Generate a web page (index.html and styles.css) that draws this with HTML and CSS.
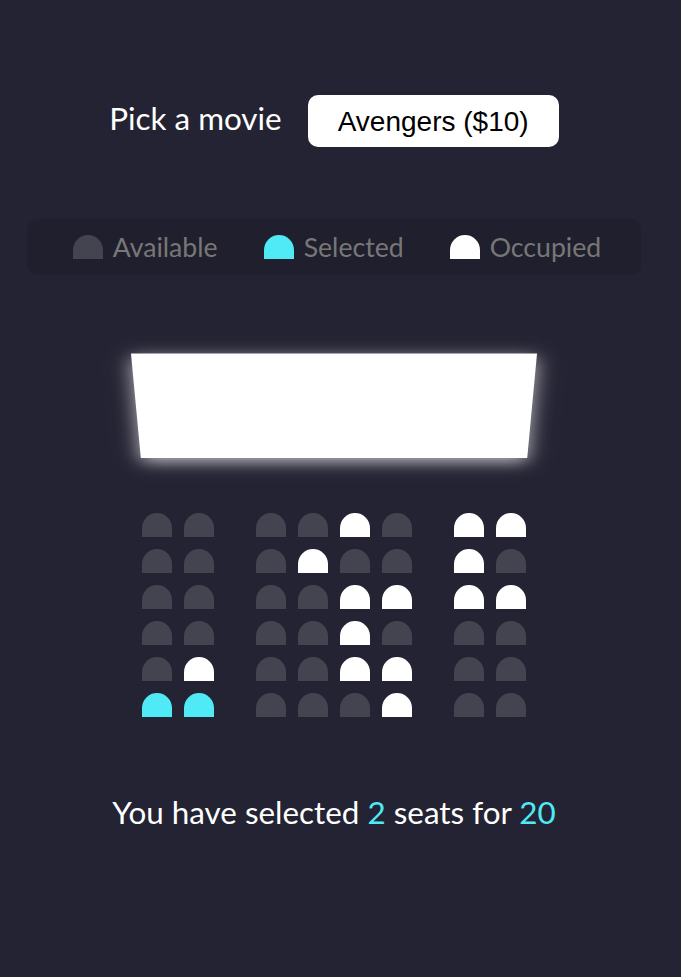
FILE: index.html
```html
<!DOCTYPE html>
<html lang="en">
<head>
<meta charset="UTF-8">
<title>Movie Seat Booking</title>
<link rel="stylesheet" href="styles.css">
</head>
<body>
  <div class="movie-container">
    <label class="movie-label">Pick a movie</label>
    <select class="movie-select">
      <option>Avengers ($10)</option>
      <option>Joker ($12)</option>
      <option>Toy Story 4 ($8)</option>
      <option>The Lion King ($9)</option>
    </select>
  </div>

  <ul class="showcase">
    <li class="legend"><div class="seat"></div><small class="legend-text">Available</small></li>
    <li class="legend"><div class="seat selected"></div><small class="legend-text">Selected</small></li>
    <li class="legend"><div class="seat occupied"></div><small class="legend-text">Occupied</small></li>
  </ul>

  <div class="container">
    <div class="screen"></div>
    <div class="row">
      <div class="seat"></div><div class="seat"></div>
      <div class="seat"></div><div class="seat"></div><div class="seat occupied"></div><div class="seat"></div>
      <div class="seat occupied"></div><div class="seat occupied"></div>
    </div>
    <div class="row">
      <div class="seat"></div><div class="seat"></div>
      <div class="seat"></div><div class="seat occupied"></div><div class="seat"></div><div class="seat"></div>
      <div class="seat occupied"></div><div class="seat"></div>
    </div>
    <div class="row">
      <div class="seat"></div><div class="seat"></div>
      <div class="seat"></div><div class="seat"></div><div class="seat occupied"></div><div class="seat occupied"></div>
      <div class="seat occupied"></div><div class="seat occupied"></div>
    </div>
    <div class="row">
      <div class="seat"></div><div class="seat"></div>
      <div class="seat"></div><div class="seat"></div><div class="seat occupied"></div><div class="seat"></div>
      <div class="seat"></div><div class="seat"></div>
    </div>
    <div class="row">
      <div class="seat"></div><div class="seat occupied"></div>
      <div class="seat"></div><div class="seat"></div><div class="seat occupied"></div><div class="seat occupied"></div>
      <div class="seat"></div><div class="seat"></div>
    </div>
    <div class="row">
      <div class="seat selected"></div><div class="seat selected"></div>
      <div class="seat"></div><div class="seat"></div><div class="seat"></div><div class="seat occupied"></div>
      <div class="seat"></div><div class="seat"></div>
    </div>
  </div>

  <p class="text">You have selected <span class="hl">2</span> seats for <span class="hl">20</span></p>
</body>
</html>
```

FILE: styles.css
```css
* {
  box-sizing: border-box;
}

html {
  background-color: #242333;
}

body {
  background-color: #242333;
  color: #fff;
  display: flex;
  flex-direction: column;
  align-items: center;
  margin: 0;
  padding: 55px 13px 0 0;
  min-height: 100vh;
  font-family: Lato, "Liberation Sans", sans-serif;
  font-size: 31.4px;
}

.movie-container {
  margin: 40px 0;
  display: flex;
  align-items: center;
}

.movie-label {
  font-size: 31.4px;
  position: relative;
  top: -3px;
}

.movie-select {
  width: 251px;
  height: 52px;
  background-color: #fff;
  color: #000;
  border: 0;
  border-radius: 10px;
  font-family: "Liberation Sans", Arial, sans-serif;
  font-size: 28px;
  margin-left: 26px;
  padding: 10px 30px;
  -webkit-appearance: none;
  appearance: none;
  outline: none;
}

.showcase {
  background: rgba(0, 0, 0, 0.1);
  padding: 10px 20px;
  margin: 32px 0;
  border-radius: 10px;
  color: #777;
  list-style-type: none;
  display: flex;
  justify-content: space-between;
}

.legend {
  display: flex;
  align-items: center;
  justify-content: center;
  margin: 0 20px;
}

.legend-text {
  margin-left: 4px;
  font-size: 26.67px;
}

.container {
  perspective: 2000px;
  margin-bottom: 60px;
}

.screen {
  background-color: #fff;
  height: 140px;
  width: 100%;
  margin: 30px 0;
  transform: rotateX(-45deg);
  box-shadow: 0 6px 20px rgba(255, 255, 255, 0.7);
}

.row {
  display: flex;
}

.seat {
  background-color: #444451;
  height: 24px;
  width: 30px;
  margin: 6px;
  border-top-left-radius: 20px;
  border-top-right-radius: 20px;
}

.seat.selected {
  background-color: #4feaf6;
}

.seat.occupied {
  background-color: #fff;
}

.row .seat:nth-of-type(2) {
  margin-right: 36px;
}

.row .seat:nth-last-of-type(2) {
  margin-left: 36px;
}

.text {
  margin: 10px 0;
}

.hl {
  color: #4feaf6;
}
```
